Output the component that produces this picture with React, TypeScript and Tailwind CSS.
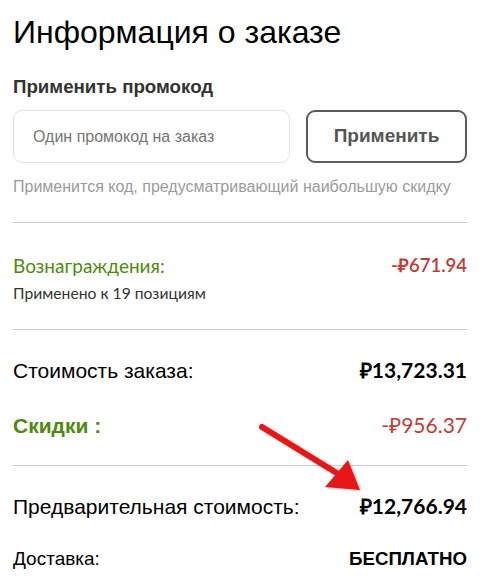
import React from 'react';

const arial = "font-['Liberation_Sans',Arial,sans-serif]";
const lato = "font-['Lato','Liberation_Sans',sans-serif]";

function Divider() {
  return <div className="h-px bg-[#cccccc]" />;
}

// red annotation arrow pointing at the pre-total
function Arrow() {
  return (
    <svg
      className="pointer-events-none absolute left-[250px] top-[415px]"
      width="120"
      height="90"
      viewBox="0 0 120 90"
    >
      <defs>
        <filter id="sh" x="-20%" y="-20%" width="140%" height="140%">
          <feDropShadow dx="1" dy="1" stdDeviation="1" floodColor="#000" floodOpacity="0.25" />
        </filter>
      </defs>
      <g filter="url(#sh)">
        <line x1="12" y1="12" x2="90" y2="60" stroke="#e81515" strokeWidth="6" strokeLinecap="round" />
        <polygon points="110,75 75,72 98,45" fill="#e81515" />
      </g>
    </svg>
  );
}

export default function App() {
  return (
    <div className="relative w-[480px] h-[582px] overflow-hidden bg-white px-[13px] pt-[14px]">
      <h1 className={`${arial} text-[32px] leading-[36px] text-black`}>Информация о заказе</h1>

      {/* Promo code */}
      <div className={`${arial} mt-[26px] text-[18.7px] leading-[22px] font-bold text-[#333333]`}>
        Применить промокод
      </div>
      <div className="mt-[12px] flex gap-[16px]">
        <input
          placeholder="Один промокод на заказ"
          className={`${arial} h-[53px] w-[277px] rounded-[9px] border border-[#e2e2e2] px-[19px] text-[16px] text-[#333] placeholder:text-[#757575] outline-none`}
        />
        <button
          className={`${arial} h-[53px] flex-1 rounded-[9px] border-2 border-[#5c5c5c] text-[19px] font-bold text-[#555555]`}
        >
          Применить
        </button>
      </div>
      <div className={`${arial} mt-[14px] text-[16px] leading-[20px] text-[#9a9a9a]`}>
        Применится код, предусматривающий наибольшую скидку
      </div>

      <div className="mt-[25px]">
        <Divider />
      </div>

      {/* Rewards */}
      <div className="flex items-start justify-between pt-[31px]">
        <div>
          <div className={`${lato} text-[19px] leading-[23px] text-[#4e8a0e]`}>Вознаграждения:</div>
          <div className={`${lato} mt-[7px] text-[15.7px] leading-[18px] text-[#333333]`}>
            Применено к 19 позициям
          </div>
        </div>
        <div className={`${lato} text-[18.5px] leading-[23px] font-semibold text-[#c23b32]`}>-₽671.94</div>
      </div>

      <div className="mt-[27px]">
        <Divider />
      </div>

      {/* Totals */}
      <div className="flex items-baseline justify-between pt-[27px]">
        <span className={`${arial} text-[21px] leading-[26px] text-black`}>Стоимость заказа:</span>
        <span className={`${lato} text-[21px] leading-[26px] font-bold text-black`}>₽13,723.31</span>
      </div>
      <div className="mt-[28px] flex items-baseline justify-between">
        <span className={`${arial} text-[21px] leading-[26px] font-bold text-[#4e8a0e]`}>Скидки :</span>
        <span className={`${lato} text-[21px] leading-[26px] text-[#c23b32]`}>-₽956.37</span>
      </div>

      <div className="mt-[26px]">
        <Divider />
      </div>

      <div className="flex items-baseline justify-between pt-[27px]">
        <span className={`${arial} text-[21px] leading-[26px] text-black`}>Предварительная стоимость:</span>
        <span className={`${lato} text-[21px] leading-[26px] font-bold text-black`}>₽12,766.94</span>
      </div>
      <div className="mt-[28px] flex items-baseline justify-between">
        <span className={`${arial} text-[19px] leading-[22px] text-black`}>Доставка:</span>
        <span className={`${arial} text-[18.7px] leading-[22px] font-bold text-black`}>БЕСПЛАТНО</span>
      </div>

      <Arrow />
    </div>
  );
}
